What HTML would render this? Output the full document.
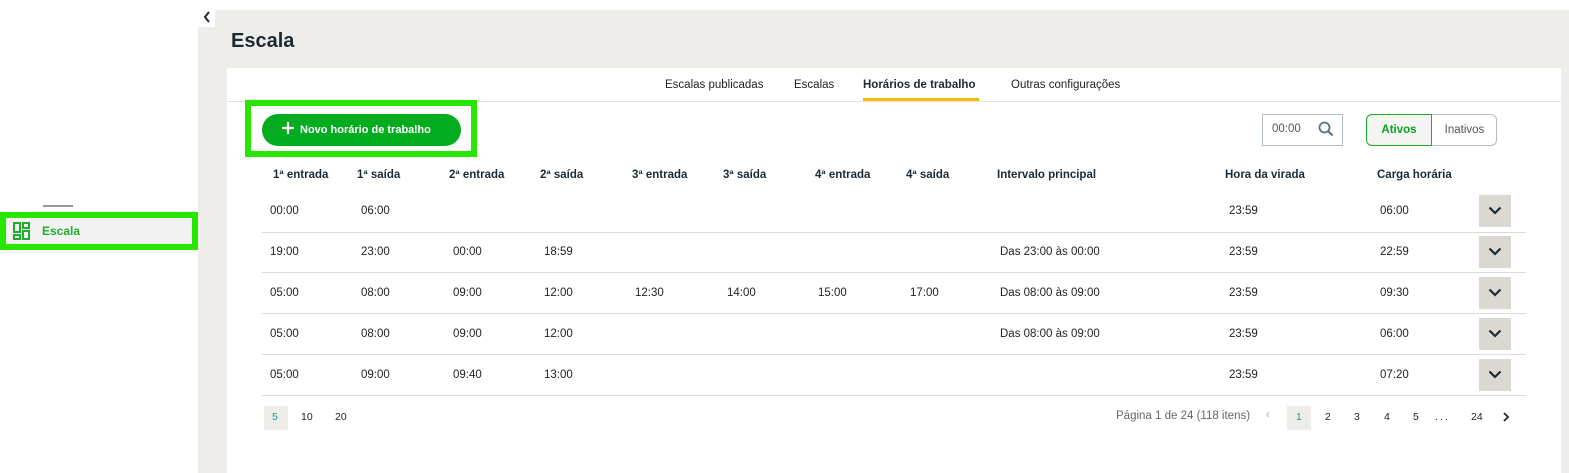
<!DOCTYPE html>
<html><head><meta charset="utf-8"><style>
*{margin:0;padding:0;box-sizing:border-box}
body{width:1569px;height:473px;position:relative;overflow:hidden;background:#fff;font-family:"Liberation Sans",sans-serif;color:#222;font-size:11.5px}
.a{position:absolute;white-space:nowrap}
.h{font-weight:bold;color:#1c2a33;font-size:11.5px}
.sep{position:absolute;left:262px;width:1264px;height:1px;background:#dcdcdc}
.btn{position:absolute;left:1479px;width:32px;height:32px;background:#dbd8d2}
.btn svg{position:absolute;left:9px;top:11px}
</style></head><body>
<div class="a" style="left:198px;top:10px;width:1371px;height:463px;background:#eeede9"></div>
<div class="a" style="left:198px;top:10px;width:17px;height:17px;background:#fff"></div>
<svg class="a" style="left:202px;top:10px" width="10" height="14"><path d="M7 2 L3 7 L7 12" stroke="#1c2a33" stroke-width="2" fill="none"/></svg>
<div class="a" style="left:231px;top:30px;font-size:20px;font-weight:bold;color:#1c2a33">Escala</div>
<div class="a" style="left:227px;top:68px;width:1334px;height:405px;background:#fff"></div>
<div class="a" style="left:227px;top:101px;width:1334px;height:1px;background:#e2e2e2"></div>
<div class="a" style="left:665px;top:79px;color:#222">Escalas publicadas</div>
<div class="a" style="left:794px;top:79px;color:#222">Escalas</div>
<div class="a h" style="left:863px;top:79px">Horários de trabalho</div>
<div class="a" style="left:863px;top:98px;width:116px;height:3px;background:#f5bd00"></div>
<div class="a" style="left:1011px;top:79px;color:#222">Outras configurações</div>
<div class="a" style="left:245px;top:100px;width:232px;height:57px;border:6px solid #27e600"></div>
<div class="a" style="left:262px;top:114px;width:199px;height:32px;border-radius:16px;background:#04ac20;color:#fff;font-weight:bold;font-size:11px;line-height:32px;padding-left:38px">Novo horário de trabalho</div>
<svg class="a" style="left:281px;top:121px" width="14" height="14"><path d="M7 1V13M1 7H13" stroke="#fff" stroke-width="2.2"/></svg>
<div class="a" style="left:1262px;top:114px;width:81px;height:32px;border:1px solid #b0bcc4"></div>
<div class="a" style="left:1272px;top:123px;color:#555">00:00</div>
<svg class="a" style="left:1318px;top:121px" width="16" height="16"><circle cx="6.5" cy="6.5" r="5" stroke="#5b7080" stroke-width="1.8" fill="none"/><path d="M10 10L14.5 14.5" stroke="#5b7080" stroke-width="2"/></svg>
<div class="a" style="left:1366px;top:114px;width:131px;height:32px;border:1px solid #b0bcc4;border-radius:6px"></div>
<div class="a" style="left:1366px;top:114px;width:66px;height:32px;border:1px solid #1fae2c;border-radius:6px 0 0 6px;background:#f4f4f2;color:#04a424;font-weight:bold;text-align:center;line-height:30px">Ativos</div>
<div class="a" style="left:1432px;top:114px;width:65px;height:32px;color:#555;text-align:center;line-height:32px">Inativos</div>
<div class="a h" style="left:273px;top:169px">1ª entrada</div>
<div class="a h" style="left:357px;top:169px">1ª saída</div>
<div class="a h" style="left:449px;top:169px">2ª entrada</div>
<div class="a h" style="left:540px;top:169px">2ª saída</div>
<div class="a h" style="left:632px;top:169px">3ª entrada</div>
<div class="a h" style="left:723px;top:169px">3ª saída</div>
<div class="a h" style="left:815px;top:169px">4ª entrada</div>
<div class="a h" style="left:906px;top:169px">4ª saída</div>
<div class="a h" style="left:997px;top:169px">Intervalo principal</div>
<div class="a h" style="left:1225px;top:169px">Hora da virada</div>
<div class="a h" style="left:1377px;top:169px">Carga horária</div>
<div class="a" style="left:270px;top:205px">00:00</div><div class="a" style="left:361px;top:205px">06:00</div>
<div class="a" style="left:1229px;top:205px">23:59</div><div class="a" style="left:1380px;top:205px">06:00</div>
<div class="btn" style="top:195px"><svg width="14" height="9"><path d="M1.5 1.5L7 7L12.5 1.5" stroke="#1c2a33" stroke-width="2.2" fill="none"/></svg></div>
<div class="sep" style="top:232px"></div>
<div class="a" style="left:270px;top:246px">19:00</div><div class="a" style="left:361px;top:246px">23:00</div><div class="a" style="left:453px;top:246px">00:00</div><div class="a" style="left:544px;top:246px">18:59</div>
<div class="a" style="left:1000px;top:246px">Das 23:00 às 00:00</div>
<div class="a" style="left:1229px;top:246px">23:59</div><div class="a" style="left:1380px;top:246px">22:59</div>
<div class="btn" style="top:236px"><svg width="14" height="9"><path d="M1.5 1.5L7 7L12.5 1.5" stroke="#1c2a33" stroke-width="2.2" fill="none"/></svg></div>
<div class="sep" style="top:272px"></div>
<div class="a" style="left:270px;top:287px">05:00</div><div class="a" style="left:361px;top:287px">08:00</div><div class="a" style="left:453px;top:287px">09:00</div><div class="a" style="left:544px;top:287px">12:00</div>
<div class="a" style="left:635px;top:287px">12:30</div><div class="a" style="left:727px;top:287px">14:00</div><div class="a" style="left:818px;top:287px">15:00</div><div class="a" style="left:910px;top:287px">17:00</div>
<div class="a" style="left:1000px;top:287px">Das 08:00 às 09:00</div>
<div class="a" style="left:1229px;top:287px">23:59</div><div class="a" style="left:1380px;top:287px">09:30</div>
<div class="btn" style="top:277px"><svg width="14" height="9"><path d="M1.5 1.5L7 7L12.5 1.5" stroke="#1c2a33" stroke-width="2.2" fill="none"/></svg></div>
<div class="sep" style="top:313px"></div>
<div class="a" style="left:270px;top:328px">05:00</div><div class="a" style="left:361px;top:328px">08:00</div><div class="a" style="left:453px;top:328px">09:00</div><div class="a" style="left:544px;top:328px">12:00</div>
<div class="a" style="left:1000px;top:328px">Das 08:00 às 09:00</div>
<div class="a" style="left:1229px;top:328px">23:59</div><div class="a" style="left:1380px;top:328px">06:00</div>
<div class="btn" style="top:318px"><svg width="14" height="9"><path d="M1.5 1.5L7 7L12.5 1.5" stroke="#1c2a33" stroke-width="2.2" fill="none"/></svg></div>
<div class="sep" style="top:354px"></div>
<div class="a" style="left:270px;top:369px">05:00</div><div class="a" style="left:361px;top:369px">09:00</div><div class="a" style="left:453px;top:369px">09:40</div><div class="a" style="left:544px;top:369px">13:00</div>
<div class="a" style="left:1229px;top:369px">23:59</div><div class="a" style="left:1380px;top:369px">07:20</div>
<div class="btn" style="top:359px"><svg width="14" height="9"><path d="M1.5 1.5L7 7L12.5 1.5" stroke="#1c2a33" stroke-width="2.2" fill="none"/></svg></div>
<div class="sep" style="top:395px"></div>
<div class="a" style="left:264px;top:406px;width:24px;height:24px;background:#eeede9"></div>
<div class="a" style="left:272px;top:411px;font-size:10.5px;color:#139e8e">5</div>
<div class="a" style="left:301px;top:411px;font-size:10.5px">10</div>
<div class="a" style="left:335px;top:411px;font-size:10.5px">20</div>
<div class="a" style="left:1116px;top:410px;color:#666">Página 1 de 24 (118 itens)</div>
<div class="a" style="left:1266px;top:409px;color:#aaa">‹</div>
<div class="a" style="left:1287px;top:406px;width:24px;height:24px;background:#eeede9"></div>
<div class="a" style="left:1296px;top:411px;font-size:10.5px;color:#139e8e">1</div>
<div class="a" style="left:1325px;top:411px;font-size:10.5px">2</div>
<div class="a" style="left:1354px;top:411px;font-size:10.5px">3</div>
<div class="a" style="left:1384px;top:411px;font-size:10.5px">4</div>
<div class="a" style="left:1413px;top:411px;font-size:10.5px">5</div>
<div class="a" style="left:1435px;top:411px;font-size:10.5px;letter-spacing:2px">...</div>
<div class="a" style="left:1471px;top:411px;font-size:10.5px">24</div>
<svg class="a" style="left:1502px;top:412px" width="8" height="10"><path d="M2 1L6 5L2 9" stroke="#1c2a33" stroke-width="1.8" fill="none"/></svg>
<div class="a" style="left:43px;top:205px;width:30px;height:2px;background:#555;opacity:.6"></div>
<div class="a" style="left:0;top:212px;width:198px;height:38px;border:6px solid #27e600;background:#f2f2f2"></div>
<svg class="a" style="left:13px;top:222px" width="18" height="18"><g stroke="#1fae2c" stroke-width="2" fill="none"><rect x="1" y="1" width="6" height="9"/><rect x="10" y="1" width="6" height="5"/><rect x="1" y="13" width="6" height="4"/><rect x="10" y="9" width="6" height="8"/></g></svg>
<div class="a" style="left:42px;top:224px;font-weight:bold;color:#1fae2c;font-size:12px">Escala</div>
</body></html>
